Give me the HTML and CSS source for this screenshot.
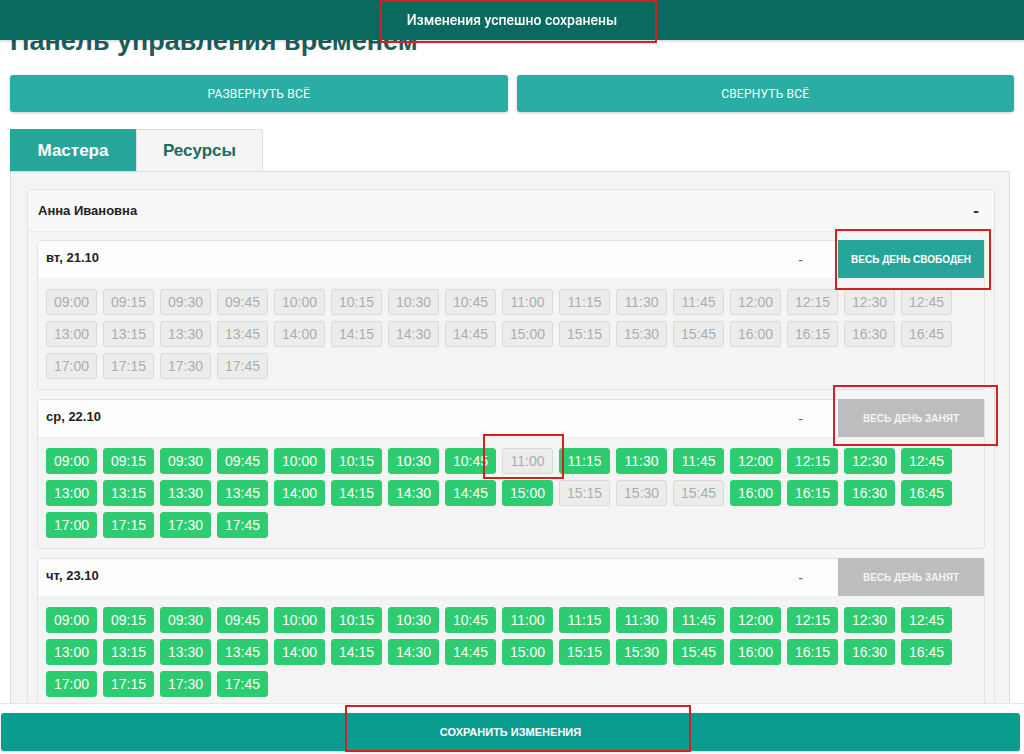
FILE: index.html
```html
<!DOCTYPE html>
<html lang="ru">
<head>
    <meta charset="UTF-8">
    <meta name="viewport" content="width=device-width, initial-scale=1.0">
    <title>Панель управления временем</title>
    <link rel="stylesheet" href="styles.css">
</head>
<body>
    <div class="toast">Изменения успешно сохранены</div>

    <div class="page">
        <h1>Панель управления временем</h1>

        <div class="toolbar">
            <button class="btn-wide">Развернуть всё</button>
            <button class="btn-wide">Свернуть всё</button>
        </div>

        <div class="tabs">
            <div class="tab active">Мастера</div>
            <div class="tab">Ресурсы</div>
        </div>

        <div class="tab-panel">
            <div class="master">
                <div class="master-head">
                    <span class="master-name">Анна Ивановна</span>
                    <span class="master-toggle">-</span>
                </div>
                <div class="master-body" id="days"></div>
            </div>
        </div>
    </div>

    <div class="save-bar">
        <button class="btn-save">Сохранить изменения</button>
    </div>

    <!-- annotation frames from the screenshot -->
    <div class="mark mark-toast"></div>
    <div class="mark mark-free"></div>
    <div class="mark mark-busy"></div>
    <div class="mark mark-slot"></div>
    <div class="mark mark-save"></div>

    <script>
        const days = [
            { title: 'вт, 21.10', allBusy: true, busy: [] },
            { title: 'ср, 22.10', allBusy: false, busy: ['11:00', '15:15', '15:30', '15:45'] },
            { title: 'чт, 23.10', allBusy: false, busy: [] }
        ];

        // working hours 09:00 - 17:45, step 15 min
        const times = [];
        for (let h = 9; h < 18; h++) {
            for (let m = 0; m < 60; m += 15) {
                times.push(String(h).padStart(2, '0') + ':' + String(m).padStart(2, '0'));
            }
        }

        const container = document.getElementById('days');

        days.forEach(day => {
            const slots = times.map(t => {
                const busy = day.allBusy || day.busy.includes(t);
                return `<span class="slot ${busy ? 'busy' : 'free'}">${t}</span>`;
            }).join('');

            const btn = day.allBusy
                ? '<button class="day-btn day-btn-free">Весь день свободен</button>'
                : '<button class="day-btn day-btn-busy">Весь день занят</button>';

            container.innerHTML += `
                <div class="day">
                    <div class="day-head">
                        <span class="day-title">${day.title}</span>
                        <span class="day-toggle">-</span>
                        ${btn}
                    </div>
                    <div class="day-slots">${slots}</div>
                </div>`;
        });
    </script>
</body>
</html>
```

FILE: styles.css
```css
body {
    margin: 0;
    font-family: Arial, "Liberation Sans", sans-serif;
    background: #fff;
    color: #222;
    overflow: hidden;
}
.page {
    padding: 0 10px;
}
.toast {
    position: fixed;
    top: 0;
    left: 0;
    right: 0;
    height: 40px;
    background: #0b6a5f;
    color: #fff;
    font-family: Roboto, "Liberation Sans", sans-serif;
    font-size: 14px;
    font-weight: 500;
    display: flex;
    align-items: center;
    justify-content: center;
    box-shadow: 0 1px 3px rgba(0, 0, 0, 0.2);
    z-index: 10;
}
h1 {
    margin: 25px 0 0;
    font-size: 27px;
    line-height: 32px;
    color: #1d5e5a;
}
.toolbar {
    display: flex;
    gap: 9px;
    margin-top: 18px;
}
.btn-wide {
    flex: 1;
    height: 37px;
    border: none;
    border-radius: 3px;
    background: #2aada5;
    color: #fff;
    font-family: Roboto, "Liberation Sans", sans-serif;
    font-size: 12px;
    letter-spacing: 0.2px;
    text-transform: uppercase;
    box-shadow: 0 1px 3px rgba(0, 0, 0, 0.2);
    cursor: pointer;
}
.tabs {
    display: flex;
    margin-top: 17px;
}
.tab {
    width: 126px;
    height: 42px;
    box-sizing: border-box;
    display: flex;
    align-items: center;
    justify-content: center;
    font-size: 17px;
    font-weight: bold;
    color: #1c6b5f;
    background: #f5f5f5;
    border: 1px solid #ddd;
    border-bottom: none;
    border-radius: 0 4px 0 0;
}
.tab + .tab {
    width: 127px;
}
.tab.active {
    background: #26a69a;
    border-color: #26a69a;
    color: #fff;
    border-radius: 0;
}
.tab-panel {
    margin-right: 4px;
    background: #f4f4f4;
    border: 1px solid #ddd;
    padding: 17px 14px 0 16px;
    min-height: 600px;
}
.master {
    border: 1px solid #e2e2e2;
    border-radius: 4px;
    background: #f5f5f5;
}
.master-head {
    height: 41px;
    display: flex;
    align-items: center;
    justify-content: space-between;
    padding: 0 15px 0 10px;
    background: #f8f8f8;
    border-bottom: 1px solid #ececec;
    font-size: 13px;
    font-weight: bold;
}
.master-toggle {
    font-size: 17px;
    color: #333;
}
.master-body {
    padding: 8px 9px 0 9px;
    display: flex;
    flex-direction: column;
    gap: 9px;
}
.day {
    border: 1px solid #e3e3e3;
    border-radius: 3px;
    background: #f4f4f4;
}
.day-head {
    height: 37px;
    display: flex;
    align-items: center;
    padding-left: 8px;
    background: #fdfdfd;
    border-bottom: 1px solid #f0f0f0;
}
.day-title {
    flex: 1;
    font-size: 13px;
    font-weight: bold;
    padding-bottom: 4px;
}
.day-toggle {
    font-size: 14px;
    color: #666;
    margin-right: 35px;
}
.day-btn {
    width: 146px;
    height: 38px;
    margin-top: -1px;
    border: none;
    color: #fff;
    font-family: Arial, "Liberation Sans", sans-serif;
    font-size: 10px;
    font-weight: bold;
    text-transform: uppercase;
    cursor: pointer;
}
.day-btn-free {
    background: #26a69a;
}
.day-btn-busy {
    background: #bdbdbd;
    color: #f4f4f4;
}
.day-slots {
    display: flex;
    flex-wrap: wrap;
    gap: 6px;
    padding: 10px 9px 10px 8px;
}
.slot {
    width: 51px;
    height: 26px;
    box-sizing: border-box;
    display: flex;
    align-items: center;
    justify-content: center;
    border-radius: 3px;
    font-size: 14px;
}
.slot.free {
    background: #2ecc71;
    border: 1px solid #2ecc71;
    color: #fff;
}
.slot.busy {
    background: #ececec;
    border: 1px solid #d9d9d9;
    color: #adadad;
}
.save-bar {
    position: fixed;
    left: 0;
    right: 0;
    bottom: 0;
    background: #fff;
    border-top: 1px solid #e6e6e6;
    padding: 9px 4px 3px 1px;
    z-index: 10;
}
.btn-save {
    width: 100%;
    height: 38px;
    border: none;
    border-radius: 3px;
    background: #0a9c8f;
    color: #fff;
    font-family: Arial, "Liberation Sans", sans-serif;
    font-size: 11px;
    font-weight: bold;
    text-transform: uppercase;
    box-shadow: 0 1px 2px rgba(0, 0, 0, 0.2);
}
.mark {
    position: absolute;
    border: 2px solid #d42020;
    box-sizing: border-box;
    z-index: 20;
}
.mark-toast { left: 380px; top: 0; width: 277px; height: 43px; }
.mark-free { left: 835px; top: 229px; width: 156px; height: 61px; }
.mark-busy { left: 833px; top: 385px; width: 165px; height: 61px; }
.mark-slot { left: 483px; top: 434px; width: 81px; height: 45px; }
.mark-save { left: 345px; top: 705px; width: 346px; height: 47px; }
```
